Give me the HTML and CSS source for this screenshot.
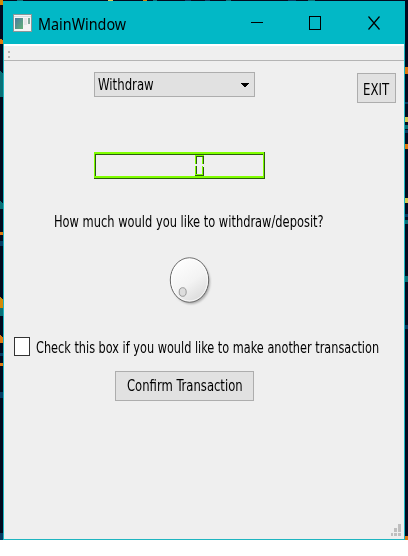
FILE: index.html
```html
<!DOCTYPE html>
<html lang="en">
<head>
<meta charset="utf-8">
<title>MainWindow</title>
<link rel="stylesheet" href="styles.css">
</head>
<body>
<div class="desktop">
  <svg class="wallpaper" width="408" height="540" shape-rendering="crispEdges">
    <rect width="408" height="540" fill="#010a20"/>
    <path fill="#d48a08" d="M0 0h3v5h-3zM143 0h4v1h-4zM0 296l3 4v14h-3z"/>
    <path fill="#e07a10" d="M0 39l3 1v4h-3zM0 232h3v3h-3zM0 335l3 2v6h-3zM0 363h3v3h-3zM405 67h3v7h-3zM405 144h3v5h-3zM405 536h3v4h-3z"/>
    <path fill="#087078" d="M0 70l3 4v23h-3zM0 201l3 3v5h-3zM0 308h3v8h-3zM405 125h3v4h-3zM405 220h3v4h-3zM405 276h3v6h-3zM17 0h6v1h-6zM153 0h4v1h-4zM226 0h5v1h-5zM308 0h7v1h-7z"/>
    <path fill="#063b62" d="M0 241h3v5h-3zM0 353h3v3h-3zM0 392h3v6h-3zM0 533h3v7h-3zM405 102h3v2h-3zM405 130h3v3h-3zM405 214h3v3h-3zM405 325h3v4h-3zM185 0h6v1h-6zM205 0h5v1h-5zM288 0h8v1h-8z"/>
    <path fill="#d4cb54" d="M405 117h3v5h-3zM405 198h3v5h-3zM108 0h5v1h-5z"/>
  </svg>
  <main class="window">
    <header class="titlebar">
      <svg class="app-icon" width="19" height="18">
        <rect x=".5" y=".5" width="18" height="17" fill="#f4f4f4" stroke="#8b9698"/>
        <path d="M1 2.5h17" stroke="#d5dcdf"/>
        <rect x="2" y="4" width="8" height="11" fill="url(#ic)"/>
        <rect x="11" y="4" width="3" height="7" fill="#e4e6e8"/>
        <rect x="15" y="4" width="2" height="6" fill="#7faa9a"/>
        <defs><linearGradient id="ic" x2="1" y2="1"><stop stop-color="#4a79a0"/><stop offset="1" stop-color="#62b277"/></linearGradient></defs>
      </svg>
      <h1 class="title"><span class="fit">MainWindow</span></h1>
      <svg class="controls" width="130" height="14" fill="none" stroke="#000" shape-rendering="crispEdges">
        <path d="M0 6.5h12M58.500 .5h11v13h-11z"/>
        <path d="M117.500 .5l11 13M128.500 .5l-11 13" shape-rendering="auto" stroke-width="1.200"/>
      </svg>
    </header>
    <div class="toolbar"><i></i><i></i></div>
    <section class="content">
      <div class="top-row">
        <div class="combo"><span class="fit">Withdraw</span>
          <svg width="8" height="5"><path d="M0 0h8v1h-1v1h-1v1h-1v1h-2v-1h-1v-1h-1v-1h-1z"/></svg>
        </div>
        <button class="button exit"><span class="fit">EXIT</span></button>
      </div>
      <svg class="lcd" width="171" height="27" shape-rendering="crispEdges">
        <path fill="#2b5d10" d="M1 0h170v27h-171v-1h1z"/>
        <path fill="#80ff00" d="M0 0h170v26h-170z"/>
        <path fill="#2b5d10" d="M1 2h168v22h-168z"/>
        <path fill="#efefef" d="M2 3h167v21h-167z"/>
        <path fill="#80ff00" d="M101 3h9v2h-9zM101 3h1v9h-1zM108 4h1v8h-1zM101 14h1v9h-1zM108 14h1v9h-1zM102 22h7v1h-7z"/>
        <path fill="#2b5d10" d="M102 4h7v1h-7zM102 5h1v7h-1zM109 4h1v8h-1zM102 14h1v8h-1zM109 15h1v8h-1zM101 23h9v1h-9z"/>
      </svg>
      <p class="question"><span class="fit">How much would you like to withdraw/deposit?</span></p>
      <svg class="dial" width="44" height="50">
        <defs>
          <linearGradient id="knob" x1=".2" x2=".8" y2="1"><stop stop-color="#fff"/><stop offset=".55" stop-color="#f3f3f3"/><stop offset="1" stop-color="#d8d8d8"/></linearGradient>
          <filter id="soft"><feGaussianBlur stdDeviation=".8"/></filter>
        </defs>
        <ellipse cx="22" cy="25" rx="19" ry="22" fill="#aaa" filter="url(#soft)"/>
        <ellipse cx="20.500" cy="23" rx="19.200" ry="22.200" fill="url(#knob)" stroke="#666"/>
        <ellipse cx="20.500" cy="23" rx="18" ry="21" fill="none" stroke="#fff" opacity=".7"/>
        <ellipse cx="13.700" cy="35" rx="3.500" ry="4.300" fill="#ddd" stroke="#999"/>
      </svg>
      <label class="check"><input type="checkbox"><span class="fit">Check this box if you would like to make another transaction</span></label>
      <button class="button confirm"><span class="fit">Confirm Transaction</span></button>
    </section>
    <svg class="grip" width="10" height="12" fill="#bfbfbf" shape-rendering="crispEdges"><path d="M0 9h2v3h-2zM3 9h3v3h-3zM7 9h3v3h-3zM3 4h3v4h-3zM7 0h3v8h-3z"/></svg>
  </main>
</div>
</body>
</html>
```
FILE: styles.css
```css
* { box-sizing: border-box; }
body { margin: 0; background: #fff; color: #000; font: 15px/18px "DejaVu Sans Condensed", "DejaVu Sans", sans-serif; }
.desktop { position: relative; width: 408px; height: 540px; padding: 1px 3px 0; }
.wallpaper { position: absolute; inset: 0; }
.window { position: relative; display: flex; flex-direction: column; width: 402px; height: 539px; background: #efefef; border: 1px solid #1eb5c0; border-top: 0; }
.titlebar { display: flex; align-items: center; flex: none; height: 43px; margin: 0 -1px; padding: 0 24px 0 10px; background: #02b8c6; }
.app-icon { margin-top: 1px; }
.title { flex: 1; margin: 2px 0 0 6px; font: 17px/24px "Noto Sans", sans-serif; }
.fit { display: inline-block; white-space: nowrap; transform: scaleX(.848); transform-origin: 0 50%; }
.title .fit { transform: scaleX(.845); }
.controls { margin-top: 1px; }
.toolbar { display: flex; flex-direction: column; gap: 3px; flex: none; height: 17px; padding: 5px 4px 0; border-top: 2px solid #fff; border-bottom: 1px solid #b4b4b4; }
.toolbar i { width: 2px; height: 2px; background: #b4b4b4; }
.content { display: flex; flex-direction: column; align-items: flex-start; padding-top: 11px; }
.top-row { display: flex; align-items: flex-start; width: 100%; padding-left: 90px; }
.combo { display: flex; align-items: center; justify-content: space-between; width: 161px; height: 25px; padding: 1px 5px 0 3px; background: #e1e1e1; border: 1px solid #adadad; }
.combo .fit { transform: scaleX(.87); }
.button { display: flex; padding: 6px 0 0; background: #e1e1e1; border: 1px solid #adadad; font: inherit; color: inherit; }
.exit { width: 39px; height: 30px; margin: 1px 0 0 102px; padding-left: 5px; }
.exit .fit { margin-top: 1px; transform: scaleX(.87); }
.lcd { margin: 49px 0 0 90px; }
.question { margin: 34px 0 0 50px; }
.dial { margin: 26px 0 0 165px; }
.check { display: flex; align-items: center; width: 375px; margin: 30px 0 0 10px; }
.check input { flex: none; appearance: none; width: 16px; height: 19px; margin: 0 6px 0 0; background: #fff; border: 1px solid #333; }
.check .fit { flex: none; margin: 2px -70px -1px 0; transform: scaleX(.838); }
.confirm { width: 139px; height: 30px; margin: 15px 0 0 111px; padding: 5px 0 0 11px; }
.confirm .fit { transform: scaleX(.86); }
.grip { position: absolute; right: 3px; bottom: 3px; }
```
